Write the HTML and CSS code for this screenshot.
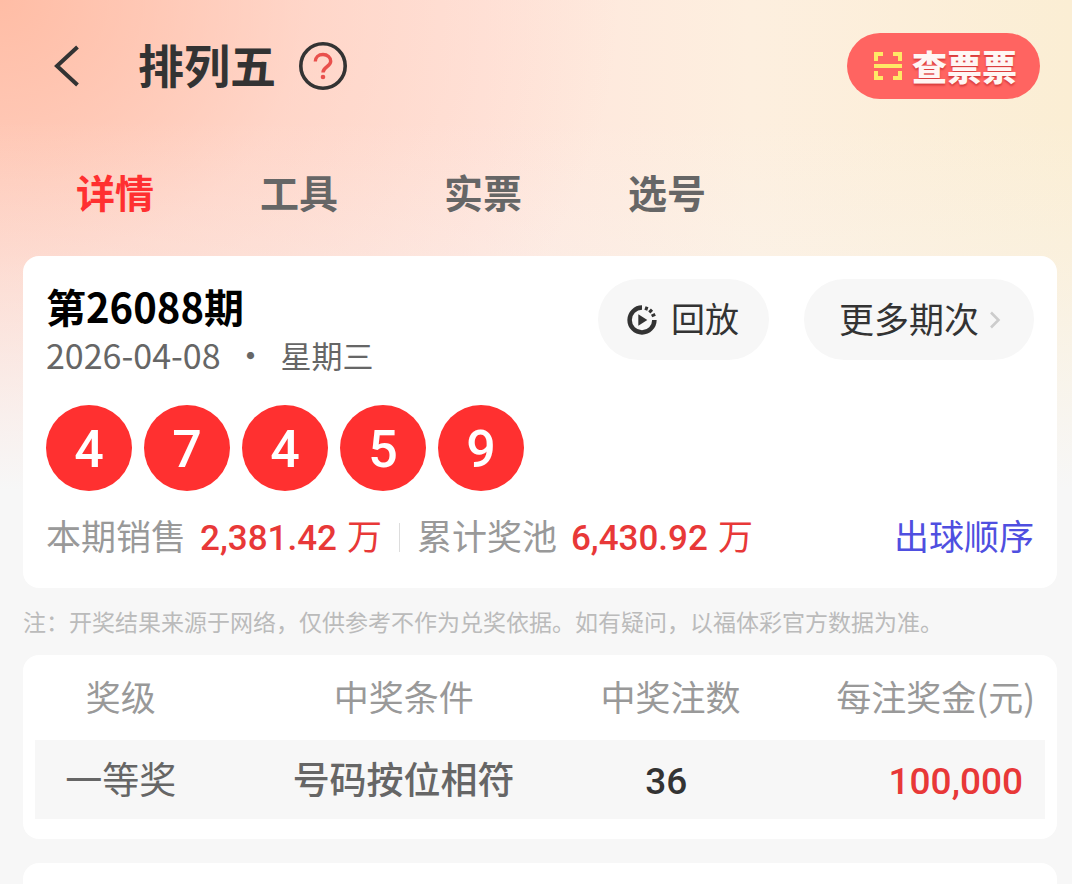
FILE: index.html
```html
<!DOCTYPE html>
<html lang="zh-CN">
<head>
<meta charset="utf-8">
<meta name="viewport" content="width=device-width, initial-scale=1">
<title>排列五</title>
<link rel="stylesheet" href="styles.css">
</head>
<body class="page">
<header class="topbar">
  <button class="icon-btn back" aria-label="返回">
    <svg width="26" height="42" viewBox="0 0 26 42" fill="none" stroke="#333" stroke-width="4"><path d="M23.500 2 3 21l20.500 19"/></svg>
  </button>
  <h1 class="title">排列五</h1>
  <button class="icon-btn" aria-label="帮助">
    <svg width="48" height="48" viewBox="0 0 48 48" fill="none"><circle cx="24" cy="24" r="22.200" stroke="#333" stroke-width="3.600"/><path d="M16.300 19.500c0-4 3.200-7 7.700-7s7.700 3 7.700 6.700c0 5.800-7.700 5.300-7.700 11.300" stroke="#e9504c" stroke-width="3.400"/><circle cx="24" cy="35" r="2.300" fill="#e9504c"/></svg>
  </button>
  <button class="scan">
    <svg width="28" height="28" viewBox="0 0 28 28" fill="none" stroke="#ffe866" stroke-width="4"><path d="M2 9V2h7M19 2h7v7M26 19v7h-7M9 26H2v-7M0 14h28"/></svg>
    <span>查票票</span>
  </button>
</header>
<nav class="tabs">
  <a class="tab tab-active" href="#detail" aria-current="page">详情</a>
  <a class="tab" href="#tools">工具</a>
  <a class="tab" href="#tickets">实票</a>
  <a class="tab" href="#pick">选号</a>
</nav>
<main class="content">
  <section class="card draw" id="detail">
    <div class="draw-head">
      <div class="issue">
        <h2 class="issue-no">第26088期</h2>
        <p class="date"><span>2026-04-08</span><span class="dot">·</span><span class="weekday">星期三</span></p>
      </div>
      <div class="actions">
        <button class="pill">
          <svg width="30" height="30" viewBox="0 0 30 30" fill="none" stroke="#333" stroke-width="4.500"><path d="M15 2.600A12.400 12.400 0 1 0 27.400 15"/><path d="M18.800 5.300 20 1.800M22.300 7.400 25 4.600M24.600 11 28.200 9.400" stroke-width="3"/><path d="M11.300 9.300v11.400l9-5.700z" fill="#333" stroke="none"/></svg>
          <span class="pill-text">回放</span>
        </button>
        <button class="pill pill-more">
          <span class="pill-text">更多期次</span>
          <svg width="12" height="18" viewBox="0 0 12 18" fill="none" stroke="#ccc" stroke-width="2.600"><path d="m2 1.500 7.500 7.500L2 16.500"/></svg>
        </button>
      </div>
    </div>
    <ol class="balls">
      <li class="ball">4</li>
      <li class="ball">7</li>
      <li class="ball">4</li>
      <li class="ball">5</li>
      <li class="ball">9</li>
    </ol>
    <div class="stats">
      <span class="stat-label">本期销售</span>
      <span class="stat-value"><b class="num">2,381.42</b><span>万</span></span>
      <span class="divider"></span>
      <span class="stat-label">累计奖池</span>
      <span class="stat-value"><b class="num">6,430.92</b><span>万</span></span>
      <a class="order" href="#order">出球顺序</a>
    </div>
  </section>
  <p class="note">注：开奖结果来源于网络，仅供参考不作为兑奖依据。如有疑问，以福体彩官方数据为准。</p>
  <section class="card prizes">
    <table class="table">
      <thead>
        <tr><th class="c-level">奖级</th><th class="c-rule">中奖条件</th><th class="c-count">中奖注数</th><th class="c-amount">每注奖金(元)</th></tr>
      </thead>
      <tbody>
        <tr><td>一等奖</td><td class="rule">号码按位相符</td><td class="num count">36</td><td class="num amount">100,000</td></tr>
      </tbody>
    </table>
  </section>
  <section class="card next"></section>
</main>
</body>
</html>
```
FILE: styles.css
```css
* {
  box-sizing: border-box;
}

.page {
  margin: 0;
  min-height: 100vh;
  display: flex;
  flex-direction: column;
  font-family: "Noto Sans CJK SC", sans-serif;
  color: #333;
  background:
    linear-gradient(180deg, rgba(247, 247, 247, 0) 120px, rgba(247, 247, 247, 0.25) 256px, #f7f7f7 490px),
    radial-gradient(ellipse 620px 540px at 0 0, rgba(255, 184, 158, 0.85), rgba(255, 194, 174, 0.35) 50%, rgba(255, 200, 185, 0) 100%),
    linear-gradient(90deg, #ffdad0, #ffe5dc 45%, #fdefdf 70%, #fbeed4);
}

h1, h2, p, ol {
  margin: 0;
  padding: 0;
}

button {
  border: 0;
  font-family: inherit;
  color: inherit;
  cursor: pointer;
}

a {
  text-decoration: none;
}

svg {
  display: block;
  flex: none;
}

.topbar {
  display: flex;
  align-items: center;
  height: 132px;
  padding: 0 32px 0 54px;
}

.icon-btn {
  padding: 0;
  background: none;
}

.title {
  margin: 0 23px 0 58px;
  padding-bottom: 6px;
  font-size: 46px;
  line-height: 60px;
  font-weight: 700;
}

.scan {
  display: flex;
  align-items: center;
  gap: 10px;
  height: 66px;
  margin-left: auto;
  padding: 0 23px 0 27px;
  border-radius: 33px;
  background: #ff6461;
  color: #fff6f4;
  font-size: 35px;
  line-height: 48px;
  font-weight: 900;
  text-shadow: 0 2px 2px #d83c3c;
}

.tabs {
  display: flex;
  height: 124px;
  padding: 0 23px;
}

.tab {
  width: 184px;
  line-height: 118px;
  font-size: 39px;
  font-weight: 700;
  text-align: center;
  color: #666;
}

.tab-active {
  color: #ff3030;
}

.content {
  flex: 1;
  display: flex;
  flex-direction: column;
  padding: 0 15px 0 23px;
}

.card {
  border-radius: 16px;
  background: #fff;
}

.draw {
  padding: 23px 23px 25px;
}

.draw-head {
  display: flex;
  justify-content: space-between;
}

.issue-no {
  font-size: 40px;
  line-height: 54px;
  font-weight: 700;
  color: #000;
}

.date {
  display: flex;
  align-items: center;
  font-size: 34px;
  line-height: 44px;
  color: #666;
}

.dot {
  width: 60px;
  text-align: center;
}

.weekday {
  font-size: 31px;
}

.actions {
  display: flex;
  gap: 35px;
}

.pill {
  display: flex;
  align-items: center;
  gap: 14px;
  height: 81px;
  padding: 0 30px 0 29px;
  border-radius: 41px;
  background: #f7f7f7;
  font-size: 34px;
  line-height: 48px;
}

.pill-text {
  padding-bottom: 3px;
}

.pill-more {
  gap: 10px;
  padding: 0 33px 0 35px;
  font-size: 35px;
}

.balls {
  display: flex;
  gap: 12px;
  margin-top: 28px;
  list-style: none;
}

.ball {
  width: 86px;
  height: 86px;
  border-radius: 50%;
  background: #ff3030;
  color: #fff;
  font: 500 52px/90px Roboto, sans-serif;
  text-align: center;
}

.stats {
  display: flex;
  align-items: baseline;
  margin-top: 20px;
  font-size: 35px;
  line-height: 48px;
}

.stat-label {
  color: #999;
}

.stat-value {
  display: flex;
  align-items: baseline;
  gap: 10px;
  margin-left: 14px;
  color: #e83838;
}

.num {
  font-family: Roboto, sans-serif;
  font-weight: 500;
}

.divider {
  align-self: center;
  width: 1px;
  height: 29px;
  margin: 0 17px;
  background: #ddd;
}

.order {
  margin-left: auto;
  color: #4f4fe0;
}

.note {
  padding: 16px 0 17px;
  font-size: 23px;
  line-height: 34px;
  color: #bbb;
}

.prizes {
  padding: 0 12px 20px;
}

.table {
  width: 100%;
  table-layout: fixed;
  border-collapse: collapse;
  white-space: nowrap;
}

th {
  height: 85px;
  padding: 0 0 4px;
  font-size: 35px;
  font-weight: 400;
  color: #999;
}

td {
  height: 79px;
  padding: 0 0 4px;
  font-size: 37px;
  text-align: center;
  color: #666;
  background: #f7f7f7;
}

.c-level {
  width: 17%;
}

.c-rule {
  width: 39%;
}

.c-count {
  width: 13%;
}

.c-amount {
  width: 31%;
  padding-right: 10px;
  text-align: right;
}

.rule {
  font-weight: 500;
}

.count {
  padding: 4px 0 0;
  color: #333;
}

.amount {
  padding: 4px 22px 0 0;
  text-align: right;
  color: #e83838;
}

.next {
  flex: 1;
  margin-top: 24px;
  border-radius: 16px 16px 0 0;
}
```
